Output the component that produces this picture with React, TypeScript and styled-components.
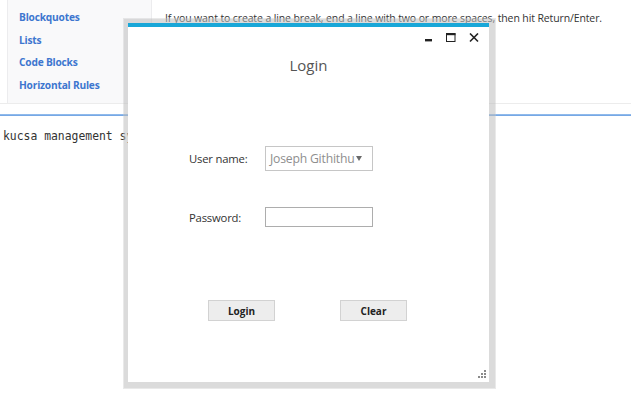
import React from "react";
import styled, { createGlobalStyle } from "styled-components";

const Global = createGlobalStyle`
  html, body { margin: 0; padding: 0; background: #ffffff; }
  body { font-family: "Open Sans", "Noto Sans", sans-serif; width: 631px; height: 413px; overflow: hidden; position: relative; }
`;

const Page = styled.div`
  position: relative;
  width: 631px;
  height: 413px;
  background: #fff;
`;

const TopSection = styled.div`
  display: flex;
  height: 104px;
  padding-left: 7px;
  border-bottom: 1px solid #ececec;
  box-sizing: border-box;
`;

const Sidebar = styled.nav`
  width: 145px;
  box-sizing: border-box;
  background: #f9f9fa;
  border-left: 1px solid #ececee;
  border-right: 1px solid #ececee;
  padding: 6px 0 0 11px;
  display: flex;
  flex-direction: column;
`;

const NavLink = styled.a`
  font-size: 10.2px;
  font-weight: 700;
  color: #3d76cf;
  line-height: 22.5px;
  height: 22.5px;
  text-decoration: none;
  letter-spacing: -0.2px;
`;

const Content = styled.p`
  margin: 11px 0 0 13px;
  font-size: 10.5px;
  line-height: 15px;
  color: #333;
  letter-spacing: -0.12px;
  white-space: nowrap;
`;

const Rule = styled.div`
  margin-top: 10px;
  height: 2px;
  background: linear-gradient(#9cc2ee, #6a9fe2);
`;

const Mono = styled.pre`
  margin: 12px 0 0 3px;
  font-family: "DejaVu Sans Mono", "Liberation Mono", monospace;
  font-size: 11.4px;
  line-height: 16px;
  color: #333;
`;

const Window = styled.div`
  position: absolute;
  left: 123px;
  top: 18px;
  width: 373px;
  height: 371px;
  box-sizing: border-box;
  border: 1px solid rgba(200, 200, 200, 0.4);
  display: flex;
`;

const Frame = styled.div`
  flex: 1;
  display: flex;
  border-style: solid;
  border-color: rgba(190, 190, 190, 0.55);
  border-width: 4px 6px 6px 4px;
`;

const Inner = styled.div`
  flex: 1;
  display: flex;
  flex-direction: column;
  background: #fff;
  border-top: 4px solid #19a7d8;
`;

const TitleBar = styled.div`
  height: 22px;
  display: flex;
  align-items: center;
  justify-content: flex-end;
  gap: 13px;
  padding-right: 10px;
`;

const CtlIcon = styled.svg`
  width: 10px;
  height: 10px;
  display: block;
`;

const Title = styled.h1`
  margin: 6px 0 0;
  font-size: 15px;
  font-weight: 400;
  line-height: 20px;
  color: #555;
  text-align: center;
`;

const Form = styled.div`
  display: grid;
  grid-template-columns: 76px 108px;
  row-gap: 36px;
  align-items: center;
  margin: 71px 0 0 61px;
`;

const Label = styled.label`
  font-size: 11.3px;
  color: #333;
  letter-spacing: -0.2px;
`;

const Combo = styled.div`
  height: 25px;
  box-sizing: border-box;
  border: 1px solid #c6c6c6;
  display: flex;
  align-items: center;
  gap: 2px;
  padding: 0 0 0 4px;
  font-size: 12.2px;
  color: #8e8e8e;
  letter-spacing: -0.2px;
  white-space: nowrap;
`;

const Arrow = styled.span`
  width: 0;
  height: 0;
  border-left: 3.5px solid transparent;
  border-right: 3.5px solid transparent;
  border-top: 5px solid #6a6a6a;
`;

const TextBox = styled.div`
  height: 20px;
  box-sizing: border-box;
  border: 1px solid #adadad;
  background: #fff;
`;

const Buttons = styled.div`
  display: flex;
  gap: 65px;
  margin: 73px 0 0 80px;
`;

const Button = styled.button`
  width: 67px;
  height: 21px;
  box-sizing: border-box;
  background: #ededed;
  border: 1px solid #d2d2d2;
  font-family: "Open Sans", "Noto Sans", sans-serif;
  font-size: 10px;
  font-weight: 700;
  color: #222;
  padding: 0;
`;

const Grip = styled.svg`
  margin: auto 2px 3px 0;
  align-self: flex-end;
  width: 9px;
  height: 9px;
  display: block;
`;

export default function App() {
  return (
    <Page>
      <Global />
      <TopSection>
        <Sidebar>
          <NavLink>Blockquotes</NavLink>
          <NavLink>Lists</NavLink>
          <NavLink>Code Blocks</NavLink>
          <NavLink>Horizontal Rules</NavLink>
        </Sidebar>
        <Content>
          If you want to create a line break, end a line with two or more spaces, then hit Return/Enter.
        </Content>
      </TopSection>
      <Rule />
      <Mono>kucsa management system</Mono>

      <Window>
        <Frame>
          <Inner>
            <TitleBar>
              <CtlIcon viewBox="0 0 10 10">
                <rect x="2" y="6" width="7" height="2.4" fill="#222" />
              </CtlIcon>
              <CtlIcon viewBox="0 0 10 10">
                <rect x="0.5" y="0.8" width="8.5" height="7.7" fill="none" stroke="#222" strokeWidth="1" />
                <rect x="0" y="0" width="9.5" height="2.2" fill="#222" />
              </CtlIcon>
              <CtlIcon viewBox="0 0 10 10">
                <path d="M1 0.5 L9 8.5 M9 0.5 L1 8.5" stroke="#222" strokeWidth="1.6" />
              </CtlIcon>
            </TitleBar>
            <Title>Login</Title>
            <Form>
              <Label>User name:</Label>
              <Combo>
                <span>Joseph Githithu</span>
                <Arrow />
              </Combo>
              <Label>Password:</Label>
              <TextBox />
            </Form>
            <Buttons>
              <Button>Login</Button>
              <Button>Clear</Button>
            </Buttons>
            <Grip viewBox="0 0 9 9">
              <g fill="#8a8a8a">
                <rect x="6" y="0" width="2" height="2" />
                <rect x="3" y="3" width="2" height="2" />
                <rect x="6" y="3" width="2" height="2" />
                <rect x="0" y="6" width="2" height="2" />
                <rect x="3" y="6" width="2" height="2" />
                <rect x="6" y="6" width="2" height="2" />
              </g>
            </Grip>
          </Inner>
        </Frame>
      </Window>
    </Page>
  );
}
